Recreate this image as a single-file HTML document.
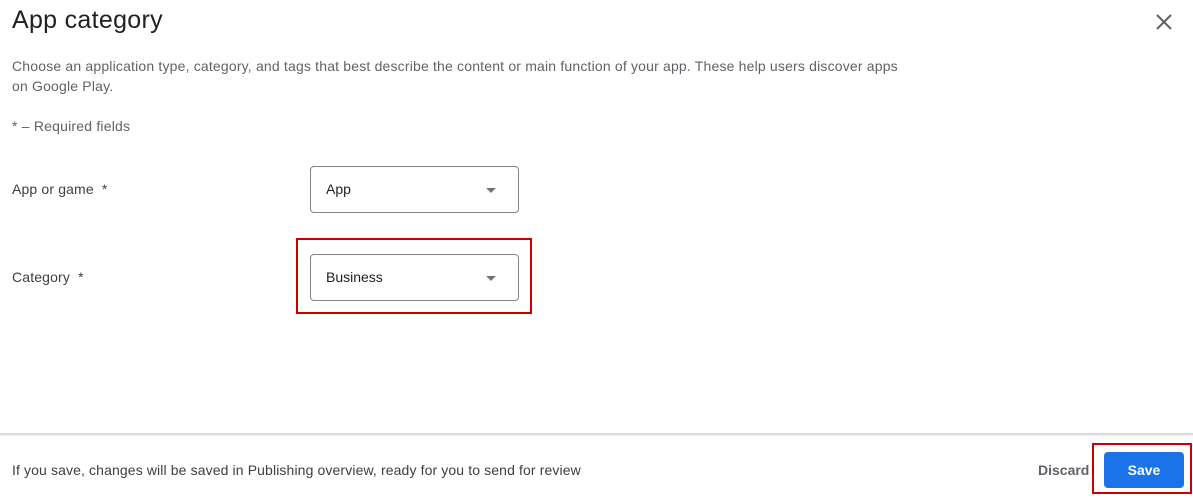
<!DOCTYPE html>
<html><head><style>
body{margin:0;width:1193px;height:498px;background:#fff;font-family:"Liberation Sans",sans-serif;position:relative;overflow:hidden;color:#202124}
.a{position:absolute;white-space:nowrap}
.t{font-size:14px;color:#5f6368}
.sel{position:absolute;left:310px;width:207px;height:45px;border:1px solid #80868b;border-radius:4px;box-sizing:content-box}
.sel span{position:absolute;left:15px;top:14px;font-size:14px;color:#202124}
.sel i{position:absolute;left:175px;top:21px;width:0;height:0;border-left:5px solid transparent;border-right:5px solid transparent;border-top:5px solid #757575}
</style></head><body>
<div class="a" style="left:12px;top:6px;font-size:25px;letter-spacing:0.3px;color:#202124">App category</div>
<svg class="a" style="left:1155px;top:13px" width="18" height="18" viewBox="0 0 18 18"><path d="M2 2L16 16M16 2L2 16" stroke="#5f6368" stroke-width="2"/></svg>
<div class="a t" style="left:12px;top:56px;line-height:20px;letter-spacing:0.18px">Choose an application type, category, and tags that best describe the content or main function of your app. These help users discover apps<br>on Google Play.</div>
<div class="a t" style="left:12px;top:118px;letter-spacing:0.2px">* – Required fields</div>
<div class="a" style="left:12px;top:181px;font-size:14px;color:#3c4043;letter-spacing:0.15px">App or game &nbsp;*</div>
<div class="sel" style="top:166px"><span>App</span><i></i></div>
<div class="a" style="left:12px;top:269px;font-size:14px;color:#3c4043;letter-spacing:0.15px">Category &nbsp;*</div>
<div class="a" style="left:296px;top:238px;width:232px;height:72px;border:2px solid #cc0000"></div>
<div class="sel" style="top:254px"><span>Business</span><i></i></div>
<div class="a" style="left:0;top:433px;width:1193px;height:3px;background:linear-gradient(#d5d5d5,#eee)"></div>
<div class="a" style="left:12px;top:462px;font-size:14px;color:#3c4043;letter-spacing:0.12px">If you save, changes will be saved in Publishing overview, ready for you to send for review</div>
<div class="a" style="left:1038px;top:462px;font-size:14px;color:#5f6368;font-weight:bold">Discard</div>
<div class="a" style="left:1092px;top:443px;width:96px;height:47px;border:2px solid #cc0000"></div>
<div class="a" style="left:1104px;top:452px;width:80px;height:36px;background:#1a73e8;border-radius:4px;color:#fff;font-size:14px;font-weight:bold;text-align:center;line-height:36px">Save</div>
</body></html>
